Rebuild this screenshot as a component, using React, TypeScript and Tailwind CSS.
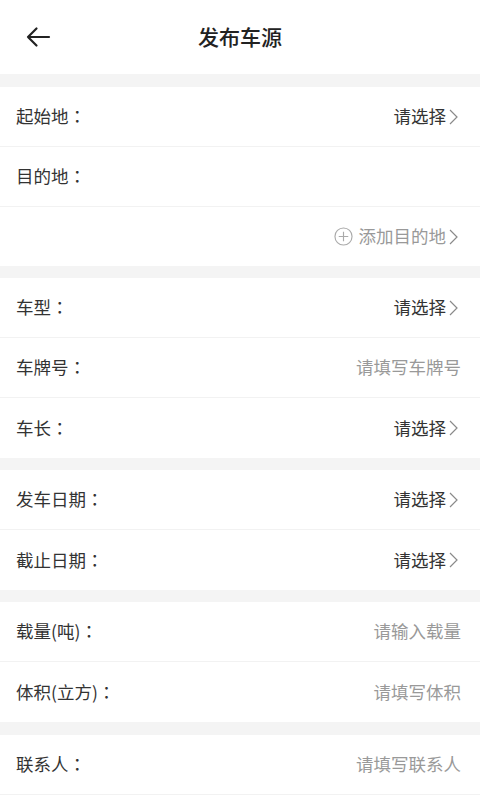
const font = { fontFamily: '"Noto Sans CJK SC", "Noto Sans", sans-serif' };
const colonFont = { fontFamily: '"Noto Sans CJK TC", sans-serif' };

function Chevron() {
  return (
    <svg width="9" height="16" viewBox="0 0 9 16" className="ml-[3px] shrink-0">
      <path d="M1 1 L8 8 L1 15" fill="none" stroke="#8a8a8a" strokeWidth="1.2" />
    </svg>
  );
}

type RowProps = {
  label?: string;
  value?: string;
  placeholder?: string;
  last?: boolean;
};

function Row({ label, value, placeholder, last }: RowProps) {
  return (
    <div
      className={`flex h-[60px] items-center justify-between bg-white pl-4 ${
        value ? "pr-[22px]" : "pr-[19px]"
      } ${last ? "" : "border-b border-[#f2f2f2]"}`}
    >
      <span className="text-[17.5px] text-[#333]">
        {label}
        <span style={colonFont}>：</span>
      </span>
      {value && (
        <span className="flex items-center text-[17.5px] text-[#333]">
          {value}
          <Chevron />
        </span>
      )}
      {placeholder && <span className="text-[17.5px] text-[#999]">{placeholder}</span>}
    </div>
  );
}

function Band() {
  return <div className="h-[12px] bg-[#f4f4f4]" />;
}

export default function App() {
  return (
    <div className="min-h-[800px] w-[480px] bg-white" style={font}>
      <header className="relative flex h-[74px] items-center justify-center bg-white">
        <svg
          width="26"
          height="22"
          viewBox="0 0 26 22"
          className="absolute left-[25px] top-[26px]"
        >
          <path
            d="M24 11 H3 M11.5 2.5 L3 11 L11.5 19.5"
            fill="none"
            stroke="#222"
            strokeWidth="2.2"
            strokeLinecap="round"
            strokeLinejoin="round"
          />
        </svg>
        <h1 className="text-[21px] font-medium text-[#222]">发布车源</h1>
      </header>
      <div className="h-[13px] bg-[#f4f4f4]" />

      <Row label="起始地" value="请选择" />
      <Row label="目的地" />
      <div className="flex h-[59px] items-center justify-end bg-white pr-[22px]">
        <span className="flex items-center text-[17.5px] text-[#999]">
          <svg width="19" height="19" viewBox="0 0 20 20" className="mr-[6px]">
            <circle cx="10" cy="10" r="9" fill="none" stroke="#aaa" strokeWidth="1.2" />
            <path d="M10 5 V15 M5 10 H15" stroke="#aaa" strokeWidth="1.2" />
          </svg>
          添加目的地
          <Chevron />
        </span>
      </div>
      <Band />

      <Row label="车型" value="请选择" />
      <Row label="车牌号" placeholder="请填写车牌号" />
      <Row label="车长" value="请选择" last />
      <Band />

      <Row label="发车日期" value="请选择" />
      <Row label="截止日期" value="请选择" last />
      <Band />

      <Row label="载量(吨)" placeholder="请输入载量" />
      <Row label="体积(立方)" placeholder="请填写体积" last />
      <div className="h-[13px] bg-[#f4f4f4]" />

      <Row label="联系人" placeholder="请填写联系人" />
    </div>
  );
}
